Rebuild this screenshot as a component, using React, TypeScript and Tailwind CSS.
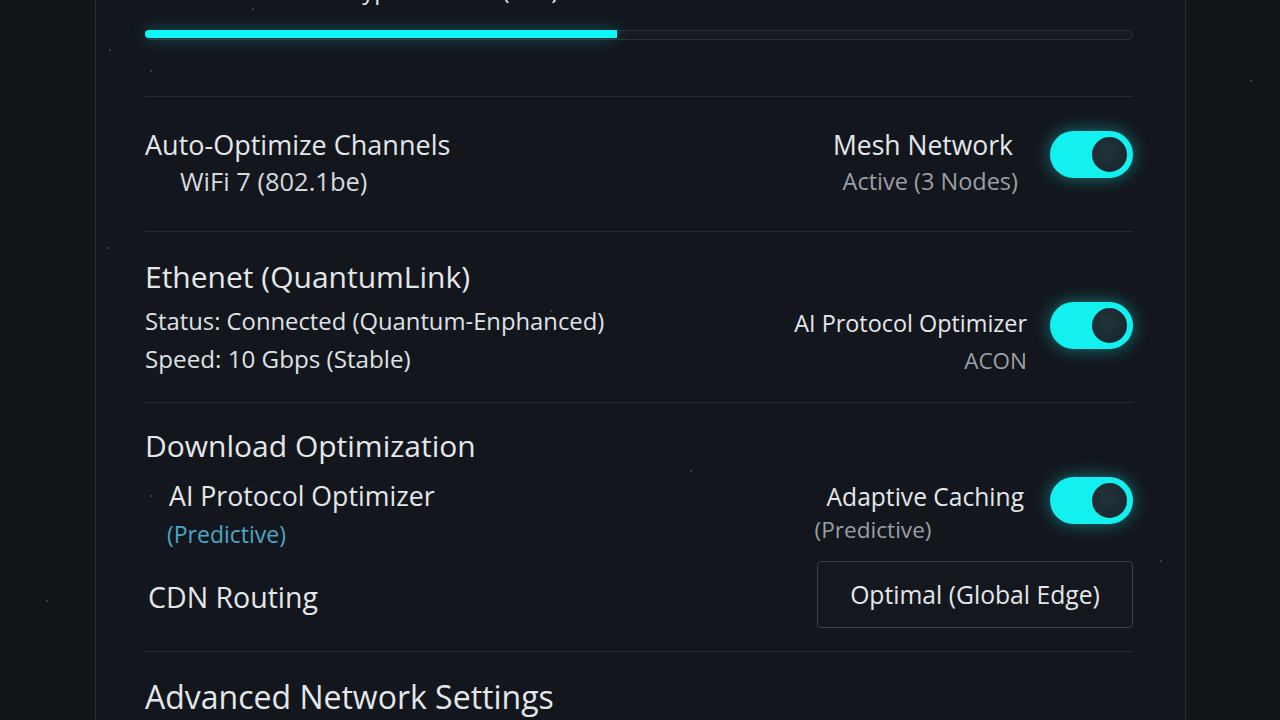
import { useState } from "react";

type ToggleProps = { on: boolean; onChange: () => void };

function Toggle({ on, onChange }: ToggleProps) {
  return (
    <button
      onClick={onChange}
      className={`relative w-[83px] h-[47px] shrink-0 rounded-full flex items-center px-[3px] ${
        on
          ? "bg-[#12f0f0] justify-end shadow-[0_0_18px_rgba(18,240,240,0.45)]"
          : "bg-[#2a2f36] justify-start"
      }`}
    >
      <span
        className={`w-[41px] h-[41px] rounded-full ${
          on
            ? "bg-[radial-gradient(circle_at_40%_40%,#22343a,#15232a)] border-[3px] border-[#12f0f0]"
            : "bg-[#c9cdd2]"
        }`}
      />
    </button>
  );
}

const stars = [
  { x: 252, y: 8 },
  { x: 109, y: 49 },
  { x: 150, y: 70 },
  { x: 107, y: 247 },
  { x: 150, y: 495 },
  { x: 550, y: 310 },
  { x: 1160, y: 560 },
  { x: 46, y: 600 },
  { x: 1250, y: 80 },
  { x: 690, y: 470 },
];

export default function App() {
  const [mesh, setMesh] = useState(true);
  const [aiOpt, setAiOpt] = useState(true);
  const [caching, setCaching] = useState(true);

  return (
    <div
      className="relative h-[720px] overflow-hidden bg-[#111419] text-[#e4e7ea]"
      style={{ fontFamily: '"Open Sans", "Noto Sans", sans-serif' }}
    >
      {stars.map((s, i) => (
        <span
          key={i}
          className="absolute w-[2px] h-[2px] rounded-full bg-[#3f6f78] opacity-70"
          style={{ left: s.x, top: s.y }}
        />
      ))}

      <div className="flow-root ml-[95px] w-[1091px] min-h-full border-x border-[#252a31] bg-[#13161c] pl-[49px] pr-[52px]">
        {/* header, scrolled mostly out of view */}
        <div className="-mt-[24px] h-[28px] pl-[66px] text-[24px] leading-[28px] whitespace-nowrap text-[#e4e7ea]">
          Network Encryption Level (AES)
        </div>

        {/* progress */}
        <div className="mt-[26px] h-[10px] rounded-full border border-[#2c3037] bg-[#161a20]">
          <div className="h-full w-[472px] -m-px rounded-l-full bg-[#0ff8f8] shadow-[0_0_16px_rgba(15,248,248,0.35)]" />
        </div>

        <div className="mt-[56px] border-t border-[#262a31]" />

        {/* row 1 */}
        <div className="flex justify-between pt-[32px] pb-[34px] border-b border-[#262a31]">
          <div>
            <div className="text-[27px] leading-[32px]">Auto-Optimize Channels</div>
            <div className="mt-[4px] pl-[35px] text-[25.5px] leading-[32px] text-[#d6d9dc]">
              WiFi 7 (802.1be)
            </div>
          </div>
          <div className="flex items-start">
            <div className="flex flex-col items-end">
              <div className="text-[26.5px] leading-[32px]">Mesh Network</div>
              <div className="mt-[4px] mr-[-5px] text-[23.5px] leading-[32px] text-[#9a9fa5]">
                Active (3 Nodes)
              </div>
            </div>
            <div className="ml-[37px] mt-[2px]">
              <Toggle on={mesh} onChange={() => setMesh(!mesh)} />
            </div>
          </div>
        </div>

        {/* row 2 */}
        <div className="flex justify-between pt-[27px] pb-[25px] border-b border-[#262a31]">
          <div>
            <div className="text-[30px] leading-[36px]">Ethenet (QuantumLink)</div>
            <div className="mt-[8px] text-[23.8px] leading-[37px] text-[#dfe2e5]">
              Status: Connected (Quantum-Enphanced)
            </div>
            <div className="text-[24.2px] leading-[37px] text-[#dfe2e5]">Speed: 10 Gbps (Stable)</div>
          </div>
          <div className="flex items-start pt-[48px]">
            <div className="flex flex-col items-end">
              <div className="text-[23.4px] leading-[32px]">AI Protocol Optimizer</div>
              <div className="mt-[6px] text-[22.5px] leading-[32px] text-[#9a9fa5]">ACON</div>
            </div>
            <div className="ml-[23px] mt-[-5px]">
              <Toggle on={aiOpt} onChange={() => setAiOpt(!aiOpt)} />
            </div>
          </div>
        </div>

        {/* row 3 */}
        <div className="pt-[25px] pb-[23px] border-b border-[#262a31]">
          <div className="text-[30px] leading-[36px]">Download Optimization</div>
          <div className="flex justify-between">
            <div className="pl-[24px] pt-[16px]">
              <div className="text-[26.7px] leading-[32px]">AI Protocol Optimizer</div>
              <div className="mt-[6px] -ml-[2px] text-[23px] leading-[32px] text-[#4aa6c6]">
                (Predictive)
              </div>
            </div>
            <div className="flex items-start pt-[17px]">
              <div className="flex flex-col">
                <div className="pl-[12px] text-[24.6px] leading-[32px]">Adaptive Caching</div>
                <div className="mt-[1px] text-[22.6px] leading-[32px] text-[#9a9fa5]">(Predictive)</div>
              </div>
              <div className="ml-[26px] mt-[-4px]">
                <Toggle on={caching} onChange={() => setCaching(!caching)} />
              </div>
            </div>
          </div>
          <div className="flex justify-between items-start mt-[11px]">
            <div className="pt-[20px] pl-[3px] text-[28.5px] leading-[32px]">CDN Routing</div>
            <button className="w-[316px] h-[67px] rounded-[4px] border border-[#3a3f46] bg-[#14171d] text-[24.7px] text-[#e4e7ea]">
              Optimal (Global Edge)
            </button>
          </div>
        </div>

        <div className="pt-[27px] text-[32px] leading-[36px]">Advanced Network Settings</div>
      </div>
    </div>
  );
}
